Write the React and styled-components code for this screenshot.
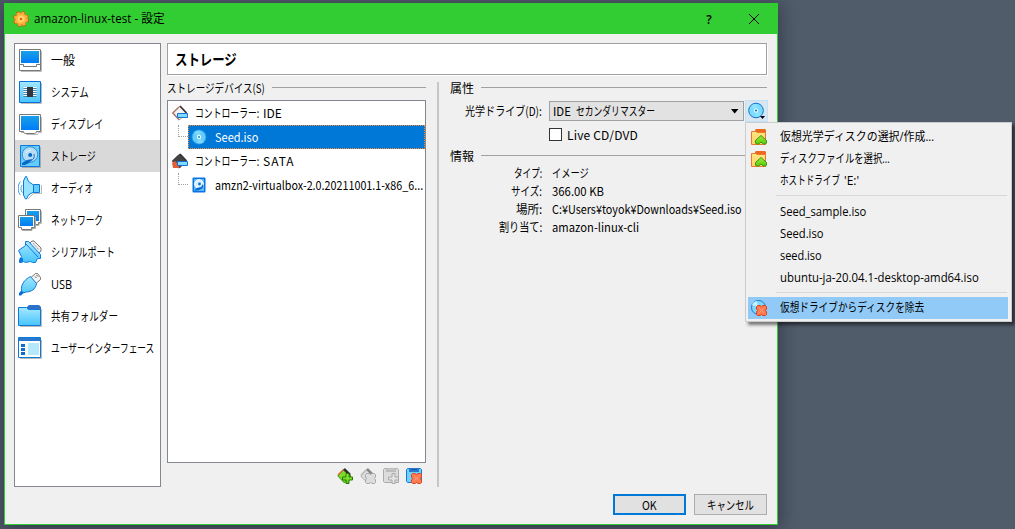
import React, { useLayoutEffect, useRef, useState } from 'react';
import styled, { createGlobalStyle } from 'styled-components';

const GlobalStyle = createGlobalStyle`
  * {
    box-sizing: border-box;
  }

  body {
    margin: 0;
    overflow: hidden;
    background: #505c6a;
    color: #000;
    font-family: 'Open Sans', 'Noto Sans CJK JP', sans-serif;
    font-size: 12px;
  }
`;

const Desktop = styled.div`
  position: relative;
  width: 1015px;
  height: 529px;
  padding: 3px 0 0 4px;
  background: #505c6a;
`;

const Window = styled.div`
  display: flex;
  flex-direction: column;
  width: 774px;
  height: 522px;
  border: 1px solid #32cd32;
  background: #f0f0f0;
  box-shadow: 0 3px 16px 2px rgba(20, 20, 40, 0.45);
`;

const TitleBar = styled.div`
  display: flex;
  align-items: center;
  height: 30px;
  padding: 0 16px 0 8px;
  background: #32cd32;
  flex: none;
`;

const Title = styled.div`
  flex: 1;
  margin-left: 5px;
`;

const TitleButton = styled.div`
  display: flex;
  justify-content: center;
  width: 14px;
  margin-left: ${(props) => props.$gap || 0}px;
  font-weight: 600;
  font-size: 12px;
`;

const Body = styled.div`
  display: flex;
  height: 453px;
  padding: 9px 9px 0;
  gap: 6px;
`;

const Sidebar = styled.div`
  width: 147px;
  height: 444px;
  border: 1px solid #828790;
  background: #fff;
  flex: none;
`;

const SidebarItem = styled.div`
  display: flex;
  align-items: center;
  gap: 9px;
  height: 32px;
  padding-left: 3px;
  background: ${(props) => (props.$active ? '#d9d9d9' : 'transparent')};
`;

const SidebarLabel = styled.div`
  padding-top: 2px;
`;

const Main = styled.div`
  width: 600px;
`;

const Header = styled.div`
  display: flex;
  align-items: center;
  height: 32px;
  padding-left: 7px;
  border: 1px solid #a0a0a0;
  background: #fff;
  box-shadow: 1px 1px 0 #fff;
  font-family: 'Noto Sans CJK JP', sans-serif;
  font-size: 15px;
  font-weight: 700;
`;

const Columns = styled.div`
  display: flex;
  height: 412px;
  padding-top: 7px;
  font-family: 'Noto Sans CJK JP', sans-serif;
`;

const DevicePane = styled.div`
  width: 259px;
  flex: none;
`;

const Splitter = styled.div`
  width: 2px;
  height: 405px;
  margin-left: 11px;
  background: #c6c6c6;
  flex: none;
`;

const DetailPane = styled.div`
  flex: 1;
  min-width: 0;
  padding-left: 11px;
`;

const GroupTitle = styled.div`
  display: flex;
  align-items: center;
  gap: 7px;
  height: 11px;
  margin-top: ${(props) => props.$top || 0}px;
  margin-bottom: ${(props) => props.$bottom || 0}px;

  &::after {
    content: '';
    flex: 1;
    height: 1px;
    background: #a0a0a0;
  }
`;

const Tree = styled.div`
  height: 363px;
  border: 1px solid #828790;
  background: #fff;
`;

const TreeRow = styled.div`
  display: flex;
  align-items: center;
  height: 24px;
  padding-left: 4px;
`;

const ControllerName = styled.div`
  display: flex;
  gap: 4px;
  margin-left: 7px;
`;

const TreeBranch = styled.div`
  width: 10px;
  height: 12px;
  margin: 0 0 12px 6px;
  border-left: 1px dotted #a0a0a0;
  border-bottom: 1px dotted #a0a0a0;
`;

const TreeLeaf = styled.div`
  display: flex;
  align-items: center;
  flex: 1;
  gap: 8px;
  height: 24px;
  padding-left: 2px;
  border: 1px dotted ${(props) => (props.$selected ? '#ff8728' : 'transparent')};
  background: ${(props) => (props.$selected ? '#0078d7' : 'transparent')};
  color: ${(props) => (props.$selected ? '#fff' : '#000')};
`;

const TreeTools = styled.div`
  display: flex;
  justify-content: flex-end;
  gap: 7px;
  padding: 5px 4px 0 0;
`;

const FormRow = styled.div`
  display: flex;
  align-items: center;
  height: ${(props) => props.$height || 18}px;
  margin-top: ${(props) => props.$top || 0}px;
`;

const FormLabel = styled.div`
  display: flex;
  justify-content: flex-end;
  width: 92px;
  margin-right: ${(props) => props.$gap || 10}px;
  flex: none;
`;

const Combo = styled.div`
  display: flex;
  align-items: center;
  width: 195px;
  height: 20px;
  padding: 0 4px 0 3px;
  gap: 5px;
  border: 1px solid #a0a0a0;
  background: #e2e2e2;
  flex: none;
`;

const ComboArrow = styled.svg`
  margin-left: auto;
`;

const DiskButton = styled.div`
  display: flex;
  justify-content: center;
  align-items: center;
  width: 23px;
  height: 22px;
  margin-left: 1px;
  border: 1px solid #c2e0f6;
  background: #d8e6f2;
  flex: none;
`;

const CheckBox = styled.div`
  width: 13px;
  height: 13px;
  margin-right: 5px;
  border: 1px solid #333;
  background: #fff;
`;

const Footer = styled.div`
  display: flex;
  justify-content: flex-end;
  gap: 8px;
  padding: 7px 10px 0 0;
`;

const Button = styled.div`
  display: flex;
  align-items: center;
  justify-content: center;
  width: 73px;
  height: 21px;
  border: ${(props) => (props.$primary ? '2px solid #0078d7' : '1px solid #adadad')};
  background: #e1e1e1;
  font-family: 'Noto Sans CJK JP', sans-serif;
`;

const Menu = styled.div`
  position: absolute;
  left: 745px;
  top: 122px;
  width: 267px;
  height: 200px;
  padding: 3px 2px 0;
  border: 1px solid #ccc;
  background: #f0f0f0;
  box-shadow: 3px 3px 3px rgba(0, 0, 0, 0.5);
`;

const MenuItem = styled.div`
  display: flex;
  align-items: center;
  height: 22px;
  width: 260px;
  padding-left: 3px;
  background: ${(props) => (props.$active ? '#91c9f7' : 'transparent')};
`;

const MenuIcon = styled.div`
  display: flex;
  width: 29px;
  padding-bottom: 1px;
`;

const DriveLetter = styled.div`
  padding-left: 4px;
`;

const MenuDivider = styled.div`
  height: 1px;
  margin: 3px 2px ${(props) => props.$bottom}px 28px;
  background: #d7d7d7;
`;

const GradientDefs = styled.svg`
  position: absolute;
`;

const FitBox = styled.span`
  display: block;
  flex: none;
  white-space: nowrap;
  line-height: 18px;
`;

const FitText = styled.span`
  display: inline-block;
  transform-origin: 0 50%;
`;

/**
 * Text set to a given width: squeezed when too wide, spaced out when too narrow.
 */
function Fit({ w, children }) {
  const ref = useRef(null);
  const [style, setStyle] = useState({});

  useLayoutEffect(() => {
    const natural = ref.current.offsetWidth;
    if (natural > w) {
      setStyle({ transform: `scaleX(${w / natural})` });
    } else {
      setStyle({ letterSpacing: `${(w - natural) / children.length}px` });
    }
  }, []);

  return (
    <FitBox style={{ width: w }}>
      <FitText ref={ref} style={style}>{children}</FitText>
    </FitBox>
  );
}

function Gradients() {
  return (
    <GradientDefs width="0" height="0">
      <defs>
        <linearGradient id="screen" x2="0" y2="1">
          <stop stopColor="#18a0e8" />
          <stop offset="1" stopColor="#007cf8" />
        </linearGradient>
        <linearGradient id="light" x2="0" y2="1">
          <stop stopColor="#a4e8ff" />
          <stop offset="1" stopColor="#48c4fc" />
        </linearGradient>
        <linearGradient id="folder" x2="0" y2="1">
          <stop stopColor="#ffe680" />
          <stop offset="1" stopColor="#ffd068" />
        </linearGradient>
        <linearGradient id="green" x2="0" y2="1">
          <stop stopColor="#a0f038" />
          <stop offset="1" stopColor="#58c810" />
        </linearGradient>
      </defs>
    </GradientDefs>
  );
}

function Icon24({ children }) {
  return (
    <svg width="24" height="24" viewBox="0 0 24 24" fill="none">
      {children}
    </svg>
  );
}

const GeneralIcon = () => (
  <Icon24>
    <path d="M3 23.5h20.500V3" stroke="#bbb" />
    <path d="M1.5 1.5h21v21h-21z" fill="#fff" stroke="#777" />
    <path d="M3 3h18v12H3z" fill="url(#screen)" />
    <path d="M2 16.5h3.5v2h13v-2H22" stroke="#777" />
  </Icon24>
);

const SystemIcon = () => (
  <Icon24>
    <path d="M3 23.5h20.500V3" stroke="#bbb" />
    <path d="M1.5 1.5h21v21h-21z" fill="url(#light)" stroke="#0870d8" />
    <path d="M5.5 7.5h13m-13 2h13m-13 2h13m-13 2h13m-13 2h13" stroke="#fff" />
    <path d="M5.5 8.5h13m-13 2h13m-13 2h13m-13 2h13m-13 2h13" stroke="#4484ac" />
    <path d="M9 7h6v10H9z" fill="#303540" />
  </Icon24>
);

const DisplayIcon = () => (
  <Icon24>
    <path d="M3 20.5h4.5l1 2h11l1-2h3V5" stroke="#bbb" />
    <path d="M1.5 2.5h21v17h-4v1l-2 1h-9l-2-1v-1h-4z" fill="#fff" stroke="#777" />
    <path d="M3 4h18v14H3z" fill="url(#screen)" />
  </Icon24>
);

const StorageIcon = () => (
  <Icon24>
    <path d="M4 23.5h18.500V3" stroke="#aaa" />
    <path d="M2.5 1.5h19v21h-19z" fill="#64ccfc" stroke="#1078d8" />
    <circle cx="12" cy="10.5" r="7.8" fill="#b5dcf4" stroke="#2f8fd6" />
    <path d="M8 9a5 5 0 0 1 5-3" stroke="#e8f8ff" />
    <circle cx="12.2" cy="11" r="2" fill="#0866c4" />
    <path d="M4 21v-2l5-3 6-1-4 4-4 2z" fill="#0868c8" />
    <path d="M10 17c5 0 7-3 6-7" stroke="#1070c8" />
  </Icon24>
);

const AudioIcon = () => (
  <Icon24>
    <path d="M16 17.500h7.500V9M10 23l6-6" stroke="#bbb" />
    <path d="M5.500 5l2-4.500h1l2 5 5 3.500v7l-5 3-2 4h-1l-2-4z" fill="#98e4ff" stroke="#1078d8" />
    <path d="M15.5 8.5h6v8h-6z" fill="#64ccfc" stroke="#1078d8" />
    <path d="M4.500 9c-2 1.500-2 6 0 7.500M2.500 5.500C-.500 8-.500 17 2.500 19" stroke="#3498e0" />
  </Icon24>
);

const NetworkIcon = () => (
  <Icon24>
    <path d="M10 17.500h11v-2h2.500V3" stroke="#bbb" />
    <path d="M7.500 1.500h15v13h-2v2H10v-2H7.500z" fill="#fff" stroke="#777" />
    <path d="M9 3h12v10H9z" fill="url(#screen)" />
    <path d="M4 22.500h10v-2h3.500V9" stroke="#aaa" />
    <path d="M.500 7.500h16v12h-3v2h-10v-2h-3z" fill="#fff" stroke="#777" />
    <path d="M2 9h13v9H2z" fill="url(#screen)" />
  </Icon24>
);

const SerialIcon = () => (
  <Icon24>
    <path d="M11 4l3-3h2l7 7v3l-3 3z" fill="#eee" stroke="#777" />
    <path d="M15 3l6 7" stroke="#999" strokeDasharray="2 1" />
    <path d="M.500 10.500l7-5v-4h3l12 13v4h-3l-2 4h-3l-2-1-5 1-2-1-2 1H1.500v-3l2-3z" fill="url(#light)" stroke="#1078d8" />
    <path d="M8 4l12 13" stroke="#1078d8" />
    <path d="M2 18h3v4H2z" fill="#1078d8" />
  </Icon24>
);

const UsbIcon = () => (
  <Icon24>
    <path d="M12.500 6l5-4.500h2l3 4v2l-4.500 4z" fill="#f4f4f4" stroke="#777" />
    <path d="M17 4.500l1.500 1.500m0-3l1.500 1.500" stroke="#555" />
    <path d="M12.500 4.500l6 7c-1 6-5 8-10 8.500l-4 1-1.500 2-1-1 1.500-3c-1-7 4-12 9-14.500z" fill="url(#light)" stroke="#1078d8" />
    <path d="M1 21l2-2 3 1-3 3.500H1z" fill="#0870d0" />
  </Icon24>
);

const FolderIcon = () => (
  <Icon24>
    <path d="M2 22.500h21.500V5" stroke="#bbb" />
    <path d="M9 4V3l2-2h10l2 2v5H9z" fill="#2c70c8" />
    <path d="M.500 3.500h8l2 2h12v16H.500z" fill="url(#light)" stroke="#1078d8" />
  </Icon24>
);

const InterfaceIcon = () => (
  <Icon24>
    <path d="M2 22.500h21.500V4" stroke="#bbb" />
    <path d="M.500 1.500h22v20H.500z" fill="#fff" stroke="#1078d8" />
    <path d="M1 2h21v3H1z" fill="#2878d0" />
    <path d="M3 8h4v3H3zm0 4h4v3H3zm0 4h4v3H3z" fill="#0c6cd0" />
    <path d="M10 7h11v12H10z" fill="#b4e8fc" />
  </Icon24>
);

const CROSS = 'M-4-5h2.500l1.500 1 1.500-1H4l1 1v2.500L4 0l1 1.500V4L4 5H1.500L0 4l-1.500 1H-4l-1-1V1.500L-4 0l-1-1.500V-4z';
const PLUS = 'M-1.500-5h3v3.500H5v3H1.500V5h-3V1.500H-5v-3h3.500z';

function Icon16({ children }) {
  return (
    <svg width="16" height="16" viewBox="0 0 16 16" fill="none">
      {children}
    </svg>
  );
}

const ControllerIcon = ({ dark }) => (
  <Icon16>
    <path d="M.800 8L8 1l6 7-6.500 7z" fill={dark ? '#444' : '#f2f2f0'} stroke={dark ? '#444' : '#aaa'} />
    <path d="M8 1l6.500 7" stroke="#333" strokeWidth="1.700" />
    <path d="M7 2L.800 8l6.500 7" stroke={dark ? '#444' : '#b07868'} strokeWidth="1.500" />
    {dark && <path d="M0 10l3-2 4 4v3H1z" fill="#e45d35" />}
    <path d="M5.500 8.500h10v4h-10z" fill="#80dcff" stroke="#1870d0" />
  </Icon16>
);

const DiscIcon = () => (
  <Icon16>
    <circle cx="8" cy="8" r="7" fill="#64ccf8" stroke="#229ce8" />
    <path d="M8 8L3 3a7 7 0 0 1 7-1zM8 8l5 5a7 7 0 0 1-7 1z" fill="#7cd6fd" />
    <circle cx="8" cy="8" r="2.200" fill="#eaffff" />
    <circle cx="8" cy="8" r=".900" fill="#0870c8" />
  </Icon16>
);

const HardDiskIcon = () => (
  <Icon16>
    <rect x="1.500" y=".500" width="13" height="15" rx="1" fill="#0c72e0" />
    <path d="M3 2h10v12H3z" fill="#58bafa" />
    <circle cx="8" cy="7" r="4.300" fill="#d8f0ff" stroke="#fff" />
    <circle cx="8.500" cy="7" r="1.400" fill="#0870d8" />
    <path d="M3 14l3-3 4-1 2-3c1 3-1 5-4 6z" fill="#0865cf" />
  </Icon16>
);

const AddControllerIcon = ({ disabled }) => (
  <Icon16>
    <path d="M.800 8L7 1l7 7-6.500 7z" fill={disabled ? '#ddd' : '#7cdc28'} stroke={disabled ? '#aaa' : '#389810'} />
    <path d="M7 1l6 6" stroke={disabled ? '#888' : '#303030'} strokeWidth="2.500" />
    <path d="M6 2L1 7" stroke={disabled ? '#bbb' : '#e06438'} strokeWidth="1.500" />
    <path
      d={disabled ? CROSS : PLUS}
      transform="translate(10.500 10.500)"
      fill={disabled ? '#ddd' : 'url(#green)'}
      stroke={disabled ? '#aaa' : '#247c08'}
    />
  </Icon16>
);

const AttachmentIcon = ({ remove }) => (
  <Icon16>
    <path d="M.500 1.500l1-1h13l1 1v13H1.500l-1-1z" fill={remove ? '#70d0fc' : '#dcdcdc'} stroke={remove ? '#1878d8' : '#aaa'} />
    <path d="M3 0h10v4H3z" fill={remove ? '#2878cc' : '#bbb'} />
    <path d="M5 1.500h6" stroke={remove ? '#1457a8' : '#ccc'} />
    <path
      d={remove ? CROSS : PLUS}
      transform="translate(10.500 10.500)"
      fill={remove ? '#ff7a50' : '#e2e2e2'}
      stroke={remove ? '#e04820' : '#aaa'}
    />
    {remove && <path d="M8.500 8.500l4 4m0-4l-4 4" stroke="#ffa080" />}
  </Icon16>
);

const OpenFolderIcon = () => (
  <Icon16>
    <path d="M4 3V1l1-1h9l1 1v6H4z" fill="#ec681c" />
    <path d="M.500 2.500h4l2 1h8v12H.500z" fill="url(#folder)" stroke="#ec7830" />
    <path d="M10 6.500l5.500 5v2.500l-1 1h-2L10 13l-2.500 2h-2l-1-1v-2.500z" fill="url(#green)" stroke="#38940c" />
  </Icon16>
);

const EjectIcon = () => (
  <Icon16>
    <circle cx="7.500" cy="7.500" r="7" fill="#7cd8fc" stroke="#1878d0" />
    <path d="M7 7L1 5a6 6 0 0 1 5-4z" fill="#c4f0ff" />
    <path d={CROSS} transform="translate(10.500 10.500)" fill="#ff7a50" stroke="#d84420" />
    <path d="M8.500 8.500l4 4m0-4l-4 4" stroke="#ffa080" />
  </Icon16>
);

const GearIcon = () => (
  <Icon16>
    <circle cx="8" cy="8" r="6.500" stroke="#c45418" strokeWidth="3" strokeDasharray="3.100 2" />
    <circle cx="8" cy="8" r="6" fill="#ffb43c" stroke="#f07c20" />
    <circle cx="8" cy="8" r="6.200" stroke="#ffac38" strokeWidth="2" strokeDasharray="2.700 2.170" />
    <circle cx="8" cy="8" r="3.500" fill="#ffd46c" />
    <circle cx="8" cy="8" r="1.300" fill="#e8641c" />
  </Icon16>
);

const categories = [
  { text: '一般', w: 24, Icon: GeneralIcon },
  { text: 'システム', w: 38, Icon: SystemIcon },
  { text: 'ディスプレイ', w: 52, Icon: DisplayIcon },
  { text: 'ストレージ', w: 45, Icon: StorageIcon, active: true },
  { text: 'オーディオ', w: 42, Icon: AudioIcon },
  { text: 'ネットワーク', w: 52, Icon: NetworkIcon },
  { text: 'シリアルポート', w: 64, Icon: SerialIcon },
  { text: 'USB', w: 21, Icon: UsbIcon },
  { text: '共有フォルダー', w: 67, Icon: FolderIcon },
  { text: 'ユーザーインターフェース', w: 103, Icon: InterfaceIcon },
];

const details = [
  { label: 'タイプ:', lw: 28, value: 'イメージ', w: 37 },
  { label: 'サイズ:', lw: 31, value: '366.00 KB', w: 52 },
  { label: '場所:', lw: 26, value: 'C:¥Users¥toyok¥Downloads¥Seed.iso', w: 190 },
  { label: '割り当て:', lw: 43, value: 'amazon-linux-cli', w: 87 },
];

const recentImages = [
  { text: 'Seed_sample.iso', w: 86 },
  { text: 'Seed.iso', w: 44 },
  { text: 'seed.iso', w: 42 },
  { text: 'ubuntu-ja-20.04.1-desktop-amd64.iso', w: 199 },
];

function DeviceTree() {
  return (
    <Tree>
      <TreeRow>
        <ControllerIcon />
        <ControllerName>
          <Fit w={64}>コントローラー:</Fit>
          <Fit w={19}>IDE</Fit>
        </ControllerName>
      </TreeRow>
      <TreeRow>
        <TreeBranch />
        <TreeLeaf $selected>
          <DiscIcon />
          <Fit w={43}>Seed.iso</Fit>
        </TreeLeaf>
      </TreeRow>
      <TreeRow>
        <ControllerIcon dark />
        <ControllerName>
          <Fit w={64}>コントローラー:</Fit>
          <Fit w={32}>SATA</Fit>
        </ControllerName>
      </TreeRow>
      <TreeRow>
        <TreeBranch />
        <TreeLeaf>
          <HardDiskIcon />
          <Fit w={208}>amzn2-virtualbox-2.0.20211001.1-x86_6...</Fit>
        </TreeLeaf>
      </TreeRow>
    </Tree>
  );
}

function DiskMenu() {
  return (
    <Menu>
      <MenuItem>
        <MenuIcon><OpenFolderIcon /></MenuIcon>
        <Fit w={154}>仮想光学ディスクの選択/作成...</Fit>
      </MenuItem>
      <MenuItem>
        <MenuIcon><OpenFolderIcon /></MenuIcon>
        <Fit w={110}>ディスクファイルを選択...</Fit>
      </MenuItem>
      <MenuItem>
        <MenuIcon />
        <Fit w={60}>ホストドライブ</Fit>
        <DriveLetter><Fit w={15}>{"'E:'"}</Fit></DriveLetter>
      </MenuItem>
      <MenuDivider $bottom={5} />
      {recentImages.map((image) => (
        <MenuItem key={image.text}>
          <MenuIcon />
          <Fit w={image.w}>{image.text}</Fit>
        </MenuItem>
      ))}
      <MenuDivider $bottom={4} />
      <MenuItem $active>
        <MenuIcon><EjectIcon /></MenuIcon>
        <Fit w={144}>仮想ドライブからディスクを除去</Fit>
      </MenuItem>
    </Menu>
  );
}

export default function App() {
  return (
    <Desktop>
      <GlobalStyle />
      <Gradients />
      <Window>
        <TitleBar>
          <GearIcon />
          <Title><Fit w={131}>amazon-linux-test - 設定</Fit></Title>
          <TitleButton>?</TitleButton>
          <TitleButton $gap={31}>
            <svg width="12" height="12" viewBox="0 0 12 12" stroke="#000">
              <path d="M1 1l10 10M11 1L1 11" />
            </svg>
          </TitleButton>
        </TitleBar>
        <Body>
          <Sidebar>
            {categories.map(({ text, w, Icon, active }) => (
              <SidebarItem key={text} $active={active}>
                <Icon />
                <SidebarLabel><Fit w={w}>{text}</Fit></SidebarLabel>
              </SidebarItem>
            ))}
          </Sidebar>
          <Main>
            <Header><Fit w={62}>ストレージ</Fit></Header>
            <Columns>
              <DevicePane>
                <GroupTitle $bottom={7}><Fit w={98}>ストレージデバイス(S)</Fit></GroupTitle>
                <DeviceTree />
                <TreeTools>
                  <AddControllerIcon />
                  <AddControllerIcon disabled />
                  <AttachmentIcon />
                  <AttachmentIcon remove />
                </TreeTools>
              </DevicePane>
              <Splitter />
              <DetailPane>
                <GroupTitle $bottom={7}><Fit w={24}>属性</Fit></GroupTitle>
                <FormRow $height={22}>
                  <FormLabel $gap={7}><Fit w={77}>光学ドライブ(D):</Fit></FormLabel>
                  <Combo>
                    <Fit w={18}>IDE</Fit>
                    <Fit w={79}>セカンダリマスター</Fit>
                    <ComboArrow width="9" height="5" viewBox="0 0 9 5">
                      <path d="M1 0h7.500L4.700 4.500z" />
                    </ComboArrow>
                  </Combo>
                  <DiskButton>
                    <svg width="20" height="20" viewBox="0 0 20 20">
                      <circle cx="9" cy="9.500" r="7.300" fill="#7cdcff" stroke="#1470c8" />
                      <path d="M9 9.500L4 5a7 7 0 0 1 6-2zM9 9.500l5 4a7 7 0 0 1-6 2z" fill="#8ce2ff" />
                      <circle cx="9" cy="9.500" r="2.300" fill="#d8f8ff" />
                      <circle cx="9" cy="9.500" r="1" fill="#1464a8" />
                      <path d="M13 15h5l-2.500 3z" />
                    </svg>
                  </DiskButton>
                </FormRow>
                <FormRow $top={4} $height={17}>
                  <FormLabel $gap={7} />
                  <CheckBox />
                  <Fit w={71}>Live CD/DVD</Fit>
                </FormRow>
                <GroupTitle $top={7} $bottom={3}><Fit w={24}>情報</Fit></GroupTitle>
                {details.map((row) => (
                  <FormRow key={row.label}>
                    <FormLabel><Fit w={row.lw}>{row.label}</Fit></FormLabel>
                    <Fit w={row.w}>{row.value}</Fit>
                  </FormRow>
                ))}
              </DetailPane>
            </Columns>
          </Main>
        </Body>
        <Footer>
          <Button $primary><Fit w={15}>OK</Fit></Button>
          <Button><Fit w={47}>キャンセル</Fit></Button>
        </Footer>
      </Window>
      <DiskMenu />
    </Desktop>
  );
}
